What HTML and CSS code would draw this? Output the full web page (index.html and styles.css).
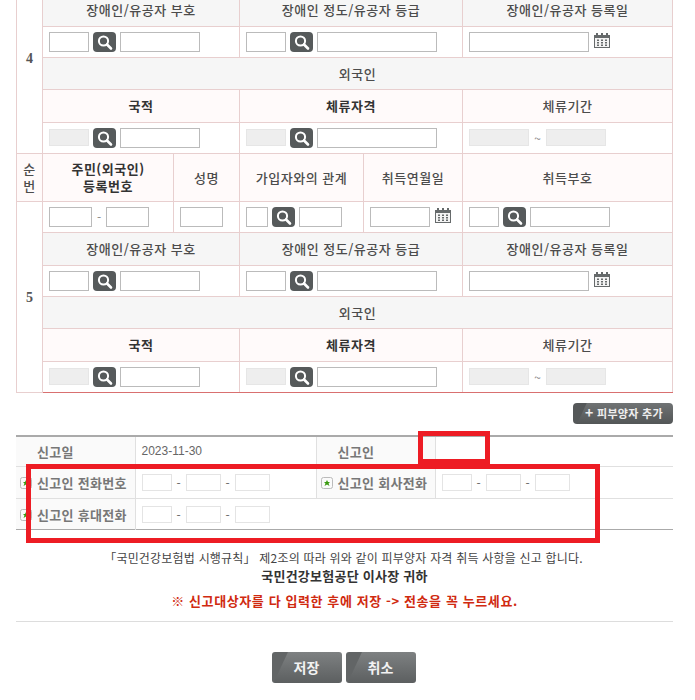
FILE: index.html
```html
<!DOCTYPE html>
<html lang="ko">
<head>
<meta charset="utf-8">
<title>피부양자 자격 취득 신고</title>
<link rel="stylesheet" href="styles.css">
</head>
<body>
<svg class="defs" width="0" height="0" aria-hidden="true">
  <symbol id="search" viewBox="0 0 23 20">
    <rect width="23" height="20" rx="4" fill="#565a5b"/>
    <circle cx="10.5" cy="9" r="4.6" fill="none" stroke="#fff" stroke-width="2"/>
    <path d="M14 12.5l4 4" stroke="#fff" stroke-width="2.6" stroke-linecap="round"/>
  </symbol>
  <symbol id="cal" viewBox="0 0 16 15">
    <path d="M0 2h16v13H0z" fill="#666a6b"/>
    <path d="M1 5h14v9H1z" fill="#f4f4f4"/>
    <path d="M2 0h2v3H2zM7 0h2v3H7zM12 0h2v3h-2z" fill="#666a6b"/>
    <path d="M3 6.500h2v1.500H3zM7 6.500h2v1.500H7zM11 6.500h2v1.500h-2zM3 9h2v1.500H3zM7 9h2v1.500H7zM11 9h2v1.500h-2zM3 11.500h2V13H3zM7 11.500h2V13H7zM11 11.500h2V13h-2z" fill="#666a6b"/>
  </symbol>
  <symbol id="req" viewBox="0 0 12 12">
    <rect x=".5" y=".5" width="11" height="11" rx="2" fill="#fafafa" stroke="#bbb"/>
    <path d="M6 3l1 2h2L7.500 6.500 8.500 9 6 7.500 3.500 9l1-2.500L3 5h2z" fill="#3a9a10"/>
  </symbol>
</svg>

<main class="page">
  <table class="grid">
    <colgroup>
      <col class="c-no"><col class="c-reg"><col class="c-name"><col class="c-rel"><col class="c-date"><col class="c-code">
    </colgroup>
    <tr class="h26">
      <td class="num num-cut" rowspan="5">4</td>
      <th class="gray cut" colspan="2">장애인/유공자 부호</th>
      <th class="gray cut" colspan="2">장애인 정도/유공자 등급</th>
      <th class="gray cut">장애인/유공자 등록일</th>
    </tr>
    <tr class="h31">
      <td colspan="2"><div class="fld"><input class="i40"><svg class="btn"><use href="#search"/></svg><input class="i80"></div></td>
      <td colspan="2"><div class="fld"><input class="i40"><svg class="btn"><use href="#search"/></svg><input class="i120"></div></td>
      <td><div class="fld"><input class="i120"><svg class="calico"><use href="#cal"/></svg></div></td>
    </tr>
    <tr class="h32"><th class="gray" colspan="5">외국인</th></tr>
    <tr class="h33">
      <th class="pink strong" colspan="2">국적</th>
      <th class="pink strong" colspan="2">체류자격</th>
      <th class="pink">체류기간</th>
    </tr>
    <tr class="h31">
      <td colspan="2"><div class="fld"><input class="i40 off" disabled><svg class="btn"><use href="#search"/></svg><input class="i80"></div></td>
      <td colspan="2"><div class="fld"><input class="i40 off" disabled><svg class="btn"><use href="#search"/></svg><input class="i120"></div></td>
      <td><div class="fld wide"><input class="i60 off" disabled><span class="sep">~</span><input class="i60 off" disabled></div></td>
    </tr>
    <tr class="h48 dark">
      <th class="pink">순<br>번</th>
      <th class="pink strong">주민(외국인)<br>등록번호</th>
      <th class="pink">성명</th>
      <th class="pink">가입자와의 관계</th>
      <th class="pink">취득연월일</th>
      <th class="pink">취득부호</th>
    </tr>
    <tr class="h31">
      <td class="num num-low" rowspan="6">5</td>
      <td><div class="fld wide"><input class="i43"><span class="sep">-</span><input class="i43"></div></td>
      <td><div class="fld"><input class="i43"></div></td>
      <td><div class="fld"><input class="i22"><svg class="btn"><use href="#search"/></svg><input class="i43"></div></td>
      <td><div class="fld"><input class="i60"><svg class="calico"><use href="#cal"/></svg></div></td>
      <td><div class="fld"><input class="i30"><svg class="btn"><use href="#search"/></svg><input class="i80"></div></td>
    </tr>
    <tr class="h33">
      <th class="gray" colspan="2">장애인/유공자 부호</th>
      <th class="gray" colspan="2">장애인 정도/유공자 등급</th>
      <th class="gray">장애인/유공자 등록일</th>
    </tr>
    <tr class="h31">
      <td colspan="2"><div class="fld"><input class="i40"><svg class="btn"><use href="#search"/></svg><input class="i80"></div></td>
      <td colspan="2"><div class="fld"><input class="i40"><svg class="btn"><use href="#search"/></svg><input class="i120"></div></td>
      <td><div class="fld"><input class="i120"><svg class="calico"><use href="#cal"/></svg></div></td>
    </tr>
    <tr class="h32"><th class="gray" colspan="5">외국인</th></tr>
    <tr class="h33">
      <th class="pink strong" colspan="2">국적</th>
      <th class="pink strong" colspan="2">체류자격</th>
      <th class="pink">체류기간</th>
    </tr>
    <tr class="h31 last">
      <td colspan="2"><div class="fld"><input class="i40 off" disabled><svg class="btn"><use href="#search"/></svg><input class="i80"></div></td>
      <td colspan="2"><div class="fld"><input class="i40 off" disabled><svg class="btn"><use href="#search"/></svg><input class="i120"></div></td>
      <td><div class="fld wide"><input class="i60 off" disabled><span class="sep">~</span><input class="i60 off" disabled></div></td>
    </tr>
  </table>

  <div class="actions"><button class="add" type="button"><span class="plus">+</span> 피부양자 추가</button></div>

  <table class="report">
    <colgroup><col class="r-th"><col class="r-td"><col class="r-th"><col></colgroup>
    <tr class="rh30">
      <th><span class="lab">신고일</span></th>
      <td class="val">2023-11-30</td>
      <th><span class="lab">신고인</span></th>
      <td></td>
    </tr>
    <tr class="rh32">
      <th><svg class="req"><use href="#req"/></svg><span class="lab">신고인 전화번호</span></th>
      <td><div class="tel"><input class="t30"><span>-</span><input class="t35"><span>-</span><input class="t35"></div></td>
      <th><svg class="req"><use href="#req"/></svg><span class="lab">신고인 회사전화</span></th>
      <td><div class="tel"><input class="t30"><span>-</span><input class="t35"><span>-</span><input class="t35"></div></td>
    </tr>
    <tr class="rh31">
      <th><svg class="req"><use href="#req"/></svg><span class="lab">신고인 휴대전화</span></th>
      <td colspan="3"><div class="tel"><input class="t30"><span>-</span><input class="t35"><span>-</span><input class="t35"></div></td>
    </tr>
  </table>

  <p class="notice">「국민건강보험법 시행규칙」 제2조의 따라 위와 같이 피부양자 자격 취득 사항을 신고 합니다.</p>
  <p class="to">국민건강보험공단 이사장 귀하</p>
  <p class="warn">※ 신고대상자를 다 입력한 후에 저장 -&gt; 전송을 꼭 누르세요.</p>

  <div class="foot">
    <button class="big" type="button">저장</button>
    <button class="big" type="button">취소</button>
  </div>
</main>

<div class="mark mark-a"></div>
<div class="mark mark-b"></div>
</body>
</html>
```

FILE: styles.css
```css
* { box-sizing: border-box; }
html, body { margin: 0; padding: 0; background: #fff; overflow: hidden; }
body {
  position: relative;
  height: 700px;
  font-family: "Noto Sans CJK KR", "Liberation Sans", sans-serif;
  font-size: 13px;
  color: #555;
}
.defs { position: absolute; }
.page { width: 673px; padding-left: 16px; }

.grid {
  width: 657px;
  table-layout: fixed;
  border-collapse: collapse;
  border-bottom: 1px solid #d97070;
}
.c-no { width: 26px; }
.c-reg { width: 131px; }
.c-name { width: 66px; }
.c-rel { width: 124px; }
.c-date { width: 99px; }
.c-code { width: 210px; }

.grid th, .grid td {
  border: 1px solid #e8cfcf;
  padding: 0;
  text-align: center;
  font-weight: 400;
  line-height: 17px;
}
.grid tr:first-child th, .grid tr:first-child td { border-top: 0; }
.grid th { color: #4c4c4c; font-size: 13px; font-weight: 500; letter-spacing: .5px; }
.grid .strong { color: #333; font-weight: 700; }
.grid .gray { background: #f6f6f6; }
.grid .pink { background: #fffafa; }
.grid .cut { padding-bottom: 6px; }
.grid .num { color: #555; font-weight: 700; font-family: "Liberation Serif", serif; font-size: 14px; }
.grid .num-cut { padding-bottom: 35px; }
.grid .num-low { padding-top: 2px; }
.grid .dark th { border-top: 1px solid #b56a6a; }
.grid .last td { border-bottom: 1px solid #d97070; }

.h26 { height: 26px; }
.h31 { height: 31px; }
.h32 { height: 32px; }
.h33 { height: 33px; }
.h48 { height: 48px; }

.fld { display: flex; align-items: center; gap: 4px; padding-left: 6px; height: 20px; }
.fld.wide { gap: 0; }
.fld input, .tel input {
  display: block;
  margin: 0;
  padding: 0;
  height: 20px;
  background: #fff;
  border: 1px solid #bbb;
  border-radius: 0;
  outline: 0;
}
.fld input.off { height: 17px; background: #eee; border-color: #e6e6e6; }
.i22 { width: 22px; }
.i30 { width: 30px; }
.i40 { width: 40px; }
.i43 { width: 43px; }
.i60 { width: 60px; }
.i80 { width: 80px; }
.i120 { width: 120px; }
.btn { width: 23px; height: 20px; flex: none; display: block; }
.calico { width: 16px; height: 15px; flex: none; display: block; margin-left: 1px; margin-top: -2px; }
.sep { width: 14px; flex: none; text-align: center; color: #888; font-size: 12px; }
.fld.wide .i60 + .sep { width: 17px; }

.actions { display: flex; justify-content: flex-end; height: 42px; padding-top: 10px; }
.add {
  width: 100px;
  height: 21px;
  padding: 0 0 0 2px;
  border: 0;
  border-radius: 4px;
  background:
    linear-gradient(115deg, #555859 0 12px, transparent 13px),
    linear-gradient(#707374, #535657);
  color: #eee;
  font: 700 11px/21px "Noto Sans CJK KR", sans-serif;
  letter-spacing: .3px;
  white-space: nowrap;
}
.plus { font-size: 14px; line-height: 14px; }

.report {
  width: 657px;
  table-layout: fixed;
  border-collapse: collapse;
  border-top: 2px solid #aaa;
  border-bottom: 1px solid #aaa;
}
.r-th { width: 119px; }
.r-td { width: 181px; }
.rh30 { height: 31px; }
.rh32 { height: 32px; }
.rh31 { height: 31px; }
.report th, .report td {
  padding: 0;
  border: 1px solid #e0e0e0;
  border-width: 0 1px 1px 0;
  text-align: left;
  font-weight: 400;
}
.report tr:last-child th, .report tr:last-child td { border-bottom: 0; }
.report td:last-child { border-right: 0; }
.report th { position: relative; background: #fafafa; padding-left: 21px; }
.lab { color: #777; font-weight: 700; font-size: 13px; letter-spacing: .3px; white-space: nowrap; }
.req { position: absolute; left: 4px; top: 10px; width: 12px; height: 12px; }
.val { padding-left: 6px !important; font-family: "Liberation Sans", sans-serif; font-size: 12px; color: #666; }
.tel { display: flex; align-items: center; padding-left: 6px; color: #666; font-size: 12px; }
.tel span { width: 14px; text-align: center; }
.tel input { height: 17px; border: 1px solid #e4e4e4; }
.t30 { width: 30px; }
.t35 { width: 35px; }

.notice, .to, .warn { margin: 0; text-align: center; white-space: nowrap; }
.notice { margin-top: 19px; padding-right: 2px; height: 18px; line-height: 18px; font-size: 12px; color: #444; letter-spacing: .2px; }
.to { height: 17px; line-height: 17px; font-size: 13px; font-weight: 700; color: #333; letter-spacing: .25px; }
.warn { margin-top: 7px; height: 20px; line-height: 20px; font-size: 13px; font-weight: 700; color: #d02a10; letter-spacing: .6px; }

.foot {
  margin-top: 10px;
  padding: 30px 2px 0 0;
  border-top: 1px solid #ddd;
  display: flex;
  justify-content: center;
  gap: 4px;
}
.big {
  width: 70px;
  height: 31px;
  padding: 0;
  border: 0;
  border-radius: 3px;
  background:
    linear-gradient(115deg, #626566 0 14px, transparent 15px),
    linear-gradient(#7e8182, #5c5f60);
  color: #f2f2f2;
  font: 700 14px/27px "Noto Sans CJK KR", sans-serif;
}

.mark { position: absolute; border: 5px solid #ed1c24; pointer-events: none; }
.mark-a { left: 418px; top: 431px; width: 72px; height: 33px; }
.mark-b { left: 26px; top: 464px; width: 574px; height: 79px; }
```
